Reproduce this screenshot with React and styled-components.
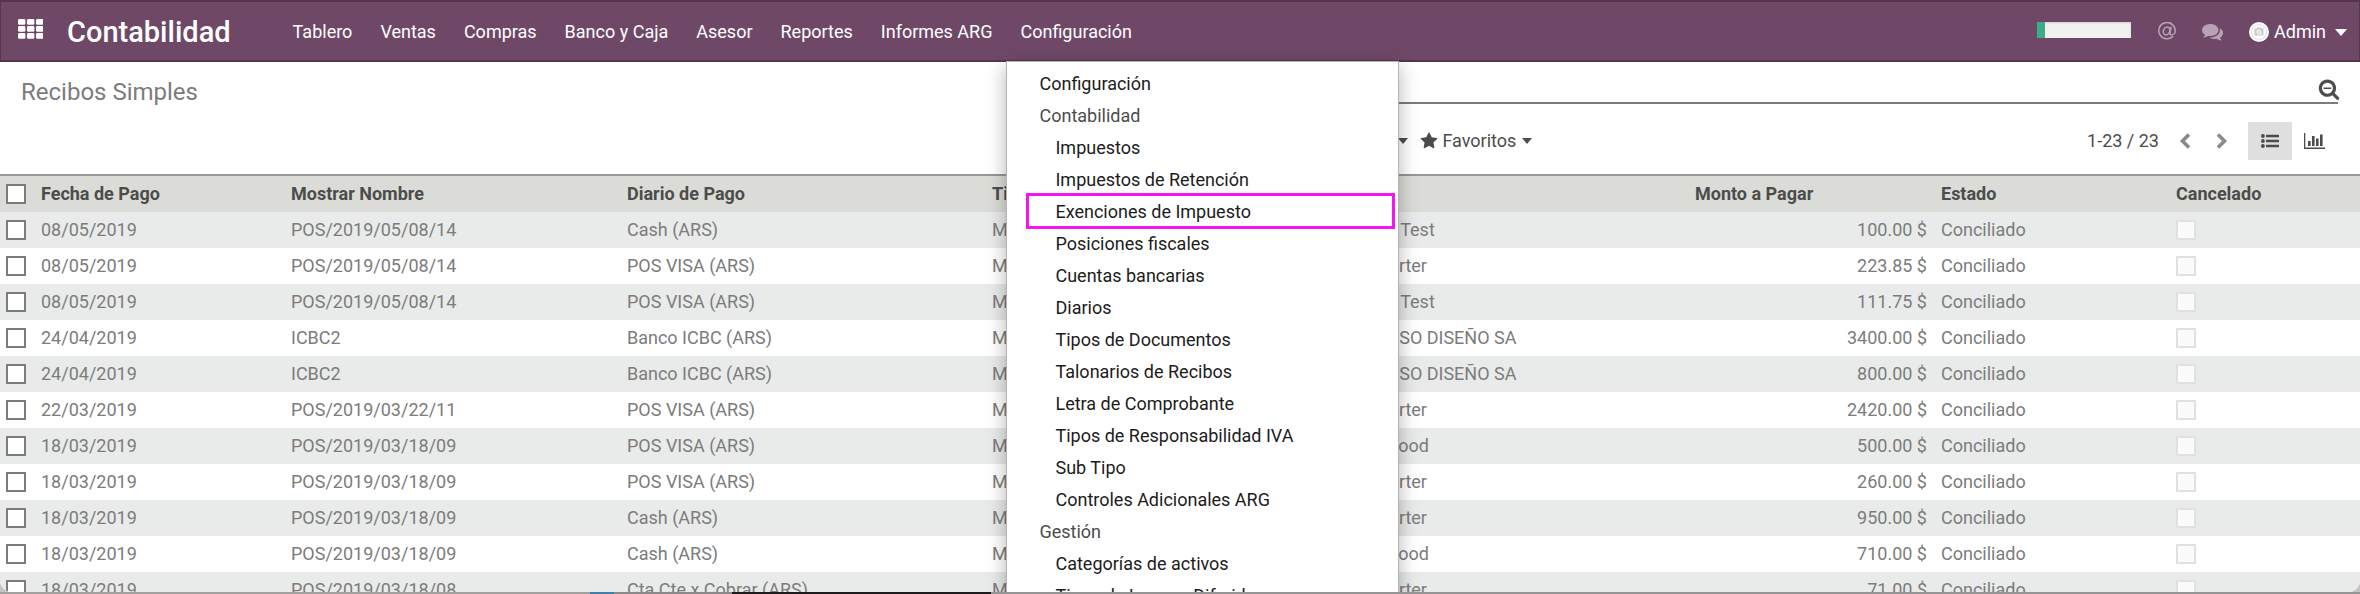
import React from 'react';
import styled, { createGlobalStyle, css } from 'styled-components';

const GlobalStyle = createGlobalStyle`
  * { box-sizing: border-box; }
  html, body { margin: 0; height: 100%; overflow: hidden; }
  #root { height: 100%; }
  body {
    background: #c4c4c4;
    font: 400 18px/24px Roboto, "Liberation Sans", sans-serif;
    color: #4c4c4c;
  }
  button, input { font: inherit; color: inherit; }
`;

const Desktop = styled.div`
  display: flex;
  flex-direction: column;
  height: 100vh;
`;

const Window = styled.div`
  flex: 1;
  min-height: 0;
  position: relative;
  overflow: hidden;
  background: #fff;
  border-radius: 0 0 12px 12px;
`;

const Dock = styled.div`
  display: flex;
  height: 2px;
  background: #949494;
`;

const DockPiece = styled.span`
  flex: 0 0 ${(p) => p.$share}%;
  background: ${(p) => p.$tone};
`;

const NavBar = styled.header`
  display: flex;
  align-items: center;
  height: 62px;
  padding: 2px 12px 0 17px;
  background: #6f4868;
  border: 2px solid #54354e;
  border-width: 2px 1px 2px 1px;
  color: #fff;
`;

const PlainButton = styled.button`
  display: inline-flex;
  align-items: center;
  padding: 0;
  border: 0;
  background: none;
  cursor: pointer;
`;

const AppsButton = styled(PlainButton)`
  padding: 0 0 7px;
`;

const Brand = styled.a`
  margin-left: 24px;
  font-size: 29px;
  line-height: 36px;
  font-weight: 500;
  color: #fff;
  text-decoration: none;
`;

const Sections = styled.ul`
  display: flex;
  margin: 0 0 0 48px;
  padding: 0;
  list-style: none;
`;

const Section = styled.li`
  position: relative;
`;

const SectionButton = styled(PlainButton)`
  height: 58px;
  padding: 0 14px;
  white-space: nowrap;
`;

const Menu = styled.ul`
  position: absolute;
  top: 100%;
  left: 0;
  z-index: 5;
  width: 393px;
  margin: 0;
  padding: 6px 0;
  list-style: none;
  background: #fff;
  border: 1px solid #b5b3b5;
  box-shadow: 0 6px 18px rgba(0, 0, 0, 0.3);
`;

const MenuItem = styled.li`
  position: relative;
  height: 32px;
  padding-left: ${(p) => (p.$nested ? 48 : 32)}px;
  line-height: 32px;
  color: #4c4c4c;
  white-space: nowrap;
  ${(p) =>
    p.$marked &&
    css`
      &::after {
        content: '';
        position: absolute;
        inset: -3px 3px -1px 19px;
        border: 3px solid #f814f2;
        pointer-events: none;
      }
    `}
`;

const MenuLink = styled.a`
  display: block;
  color: #1c1c1c;
  text-decoration: none;
`;

const Systray = styled.div`
  display: flex;
  align-items: center;
  margin-left: auto;
`;

const Progress = styled.div`
  width: 94px;
  height: 16px;
  margin: 0 27px 4px 0;
  background: #f1f1f1;
  box-shadow: inset 0 1px 2px rgba(0, 0, 0, 0.15);
`;

const ProgressFill = styled.div`
  height: 100%;
  background: #3aac87;
`;

const TrayButton = styled(PlainButton)`
  margin-right: 26px;
  padding-bottom: 2px;
  color: #b7a3b3;
`;

const UserButton = styled(PlainButton)`
  gap: 5px;
`;

const Caret = styled.span`
  width: 0;
  height: 0;
  margin-left: ${(p) => p.$gap}px;
  border: solid transparent;
  border-width: ${(p) => p.$size + 1}px ${(p) => p.$size}px 0;
  border-top-color: currentColor;
`;

const ControlPanel = styled.section`
  display: grid;
  grid-template-columns: 1fr 1fr;
  height: 112px;
  padding: 0 22px 0 21px;
`;

const Title = styled.h1`
  margin: 0;
  padding-top: 14px;
  font-size: 24px;
  line-height: 32px;
  font-weight: 400;
  color: #7c7c7c;
`;

const SearchColumn = styled.div`
  display: flex;
  flex-direction: column;
`;

const SearchBox = styled.div`
  display: flex;
  align-items: flex-end;
  height: 42px;
  border-bottom: 2px solid #7c7c7c;
`;

const SearchInput = styled.input`
  flex: 1;
  height: 32px;
  border: 0;
  outline: 0;
  background: none;
`;

const SearchButton = styled(PlainButton)`
  margin-right: -2px;
  padding-bottom: 2px;
`;

const PanelRow = styled.div`
  display: flex;
  align-items: center;
  justify-content: space-between;
  height: 70px;
  padding: 4px 2px 0 0;
`;

const Filters = styled.div`
  display: flex;
  align-items: center;
  gap: 12px;
`;

const FilterButton = styled(PlainButton)`
  gap: 4px;
`;

const PagerGroup = styled.div`
  display: flex;
  align-items: center;
`;

const PagerButton = styled(PlainButton)`
  justify-content: center;
  width: 37px;
  height: 38px;
  color: #8a8a8a;
`;

const ViewButton = styled(PlainButton)`
  justify-content: center;
  width: 44px;
  height: 38px;
  background: ${(p) => (p.$active ? '#dfdfdf' : 'transparent')};
`;

const PagerText = styled.span`
  margin-right: 7px;
`;

const Views = styled.div`
  display: flex;
  margin-left: 8px;
`;

const Table = styled.table`
  width: 100%;
  table-layout: fixed;
  border-collapse: separate;
  border-spacing: 0;
  border-top: 2px solid #979797;
`;

const HeadCell = styled.th`
  height: 36px;
  padding: 0 7px;
  background: #dbdcd7;
  font-weight: 700;
  text-align: left;
  white-space: nowrap;
`;

const Row = styled.tr`
  background: #fff;
  &:nth-child(odd) { background: #e9ebea; }
`;

const Cell = styled.td`
  height: 36px;
  padding: 0 7px;
  color: #7c7c7c;
  text-align: ${(p) => (p.$right ? 'right' : 'left')};
  white-space: nowrap;
`;

const CheckBox = styled.input.attrs({ type: 'checkbox' })`
  appearance: none;
  display: block;
  width: 20px;
  height: 20px;
  margin: 0 0 0 ${(p) => (p.disabled ? 0 : -1)}px;
  background: ${(p) => (p.disabled ? '#fafafa' : '#fff')};
  border: 2px solid ${(p) => (p.disabled ? '#e1e1e1' : '#7c7c7c')};
  &:checked { background: #7c7c7c; }
`;

const AppsIcon = () => (
  <svg width="25" height="20" viewBox="0 0 25 20" fill="currentColor">
    {[0, 7, 14].map((y) =>
      [0, 9, 18].map((x) => <rect key={`${x}-${y}`} x={x} y={y} width="7.4" height="5.8" rx="1.4" />)
    )}
  </svg>
);

const AtIcon = () => (
  <svg width="18" height="18" viewBox="0 0 18 18" fill="none" stroke="currentColor" strokeWidth="1.5" strokeLinecap="round">
    <path d="M14.6 14.6A8.2 8.2 0 1 1 17.2 8.4c0 2.6-1.6 4.4-3.5 4.4-1.3 0-1.9-.8-1.6-2.2L13 5.2" />
    <ellipse cx="8.6" cy="9" rx="3.2" ry="4" transform="rotate(20 8.6 9)" />
  </svg>
);

const CommentsIcon = () => (
  <svg width="21" height="21" viewBox="0 0 1792 1792" fill="currentColor">
    <path d="M1408 768q0 139-94 257t-256.500 186.500-353.500 68.500q-86 0-176-16-124 88-278 128-36 9-86 16h-3q-11 0-20.500-8t-11.500-21q-1-3-1-6.500t.5-6.500 2-6l2.500-5 3.500-5.500 4-5 4.500-5 4-4.500q5-6 23-25t26-29.500 22.500-29 25-38.500 20.500-44q-124-72-195-177t-71-224q0-139 94-257t256.500-186.500 353.500-68.500 353.500 68.500 256.500 186.500 94 257zm384 256q0 120-71 224.500t-195 176.500q10 24 20.500 44t25 38.500 22.500 29 26 29.500 23 25q1 1 4 4.500t4.500 5 4 5 3.500 5.500l2.500 5 2 6 .5 6.500-1 6.500q-3 14-13 22t-22 7q-50-7-86-16-154-40-278-128-90 16-176 16-271 0-472-132 58 4 88 4 161 0 309-45t264-129q125-92 192-212t67-254q0-77-23-152 129 71 204 178t75 230z" />
  </svg>
);

const AvatarIcon = () => (
  <svg width="20" height="20" viewBox="0 0 20 20">
    <circle cx="10" cy="10" r="10" fill="#fff" />
    <circle cx="10" cy="10" r="7.500" fill="none" stroke="#e2e2e2" />
    <path d="M5.500 6.500h2l1-1h3l1 1h2v7h-9z" fill="#c9c9c9" />
    <circle cx="10" cy="10" r="2" fill="none" stroke="#fff" />
    <path d="M4.500 5l11 10" stroke="#eee" />
  </svg>
);

const SearchMinusIcon = () => (
  <svg width="22" height="22" viewBox="0 0 1792 1792" fill="currentColor">
    <path d="M1088 800v64q0 13-9.500 22.500t-22.500 9.500h-576q-13 0-22.500-9.500t-9.500-22.500v-64q0-13 9.500-22.500t22.500-9.500h576q13 0 22.500 9.500t9.500 22.500zm128 32q0-185-131.500-316.500t-316.500-131.500-316.500 131.500-131.500 316.500 131.500 316.500 316.500 131.500 316.500-131.500 131.500-316.500zm512 832q0 53-37.500 90.500t-90.500 37.500q-54 0-90-38l-343-342q-179 124-399 124-143 0-273.500-55.500t-225-150-150-225-55.500-273.500 55.500-273.500 150-225 225-150 273.500-55.500 273.500 55.500 225 150 150 225 55.500 273.500q0 220-124 399l343 343q37 37 37 90z" />
  </svg>
);

const StarIcon = () => (
  <svg width="18" height="18" viewBox="0 0 1792 1792" fill="currentColor">
    <path d="M1728 647q0 22-26 48l-363 354 86 500q1 7 1 20 0 21-10.500 35.500t-30.500 14.500q-19 0-40-12l-449-236-449 236q-22 12-40 12-21 0-31.500-14.500t-10.500-35.500q0-6 2-20l86-500-364-354q-25-27-25-48 0-37 56-46l502-73 225-455q19-41 49-41t49 41l225 455 502 73q56 9 56 46z" />
  </svg>
);

const FunnelIcon = () => (
  <svg width="16" height="16" viewBox="0 0 16 16" fill="currentColor">
    <path d="M1 2h14l-5 6v6l-4-2V8z" />
  </svg>
);

const BarsIcon = () => (
  <svg width="16" height="16" viewBox="0 0 16 16" fill="currentColor">
    <path d="M1 2h14v2H1zM1 7h14v2H1zM1 12h14v2H1z" />
  </svg>
);

const ChevronIcon = ({ points }) => (
  <svg width="12" height="16" viewBox="0 0 12 16" fill="none" stroke="currentColor" strokeWidth="3.600">
    <polyline points={points} />
  </svg>
);

const ListIcon = () => (
  <svg width="18" height="14" viewBox="0 0 18 14" fill="currentColor">
    {[2, 7, 12].map((y) => (
      <g key={y}>
        <circle cx="1.900" cy={y} r="1.900" />
        <rect x="5" y={y - 1.3} width="13" height="2.600" rx=".4" />
      </g>
    ))}
  </svg>
);

const ChartIcon = () => (
  <svg width="21" height="16" viewBox="0 0 21 16" fill="currentColor">
    <path d="M0 0h1.300v14.500H21V16H0zM4 8h2.600v5H4zM8 3h2.600v10H8zM12 5.500h2.600V13H12zM16 1.500h2.600V13H16z" />
  </svg>
);

const sections = ['Tablero', 'Ventas', 'Compras', 'Banco y Caja', 'Asesor', 'Reportes', 'Informes ARG'];

const menu = [
  { label: 'Configuración' },
  { label: 'Contabilidad', heading: true },
  { label: 'Impuestos', nested: true },
  { label: 'Impuestos de Retención', nested: true },
  { label: 'Exenciones de Impuesto', nested: true, marked: true },
  { label: 'Posiciones fiscales', nested: true },
  { label: 'Cuentas bancarias', nested: true },
  { label: 'Diarios', nested: true },
  { label: 'Tipos de Documentos', nested: true },
  { label: 'Talonarios de Recibos', nested: true },
  { label: 'Letra de Comprobante', nested: true },
  { label: 'Tipos de Responsabilidad IVA', nested: true },
  { label: 'Sub Tipo', nested: true },
  { label: 'Controles Adicionales ARG', nested: true },
  { label: 'Gestión', heading: true },
  { label: 'Categorías de activos', nested: true },
  { label: 'Tipos de Ingreso Diferido', nested: true },
];

const receipts = [
  ['08/05/2019', 'POS/2019/05/08/14', 'Cash (ARS)', 'Partner Test', '100.00 $'],
  ['08/05/2019', 'POS/2019/05/08/14', 'POS VISA (ARS)', 'Cole Porter', '223.85 $'],
  ['08/05/2019', 'POS/2019/05/08/14', 'POS VISA (ARS)', 'Partner Test', '111.75 $'],
  ['24/04/2019', 'ICBC2', 'Banco ICBC (ARS)', 'UNIVERSO DISEÑO SA', '3400.00 $'],
  ['24/04/2019', 'ICBC2', 'Banco ICBC (ARS)', 'UNIVERSO DISEÑO SA', '800.00 $'],
  ['22/03/2019', 'POS/2019/03/22/11', 'POS VISA (ARS)', 'Cole Porter', '2420.00 $'],
  ['18/03/2019', 'POS/2019/03/18/09', 'POS VISA (ARS)', 'Dean Wood', '500.00 $'],
  ['18/03/2019', 'POS/2019/03/18/09', 'POS VISA (ARS)', 'Cole Porter', '260.00 $'],
  ['18/03/2019', 'POS/2019/03/18/09', 'Cash (ARS)', 'Cole Porter', '950.00 $'],
  ['18/03/2019', 'POS/2019/03/18/09', 'Cash (ARS)', 'Dean Wood', '710.00 $'],
  ['18/03/2019', 'POS/2019/03/18/08', 'Cta Cte x Cobrar (ARS)', 'Cole Porter', '71.00 $'],
];

const Column = styled.col`
  width: ${(p) => (p.$width ? `${p.$width}px` : 'auto')};
`;

const columnWidths = [34, 250, 336, 365, 345, null, 246, 235, 191];

export default function App() {
  return (
    <Desktop>
      <GlobalStyle />
      <Window>
        <NavBar>
          <AppsButton aria-label="Aplicaciones"><AppsIcon /></AppsButton>
          <Brand href="#contabilidad">Contabilidad</Brand>
          <nav>
            <Sections>
              {sections.map((name) => (
                <Section key={name}><SectionButton>{name}</SectionButton></Section>
              ))}
              <Section>
                <SectionButton aria-expanded="true">Configuración</SectionButton>
                <Menu>
                  {menu.map((item) => (
                    <MenuItem key={item.label} $nested={item.nested} $marked={item.marked}>
                      {item.heading ? item.label : <MenuLink href="#menu">{item.label}</MenuLink>}
                    </MenuItem>
                  ))}
                </Menu>
              </Section>
            </Sections>
          </nav>
          <Systray>
            <Progress role="progressbar" aria-label="Progreso" aria-valuenow={8}>
              <ProgressFill style={{ width: '8.5%' }} />
            </Progress>
            <TrayButton aria-label="Menciones"><AtIcon /></TrayButton>
            <TrayButton aria-label="Conversaciones"><CommentsIcon /></TrayButton>
            <UserButton>
              <AvatarIcon />
              Admin
              <Caret $size={6} $gap={4} />
            </UserButton>
          </Systray>
        </NavBar>

        <ControlPanel>
          <Title>Recibos Simples</Title>
          <SearchColumn>
            <SearchBox>
              <SearchInput type="text" aria-label="Buscar" />
              <SearchButton aria-label="Opciones de búsqueda"><SearchMinusIcon /></SearchButton>
            </SearchBox>
            <PanelRow>
              <Filters>
                <FilterButton><FunnelIcon />Filtros<Caret $size={5} $gap={2} /></FilterButton>
                <FilterButton><BarsIcon />Agrupar por<Caret $size={5} $gap={2} /></FilterButton>
                <FilterButton><StarIcon />Favoritos<Caret $size={5} $gap={2} /></FilterButton>
              </Filters>
              <PagerGroup>
                <PagerText>1-23 / 23</PagerText>
                <PagerButton aria-label="Anterior"><ChevronIcon points="10,1.500 3.500,8 10,14.500" /></PagerButton>
                <PagerButton aria-label="Siguiente"><ChevronIcon points="2,1.500 8.500,8 2,14.500" /></PagerButton>
                <Views>
                  <ViewButton $active aria-label="Lista"><ListIcon /></ViewButton>
                  <ViewButton aria-label="Gráfico"><ChartIcon /></ViewButton>
                </Views>
              </PagerGroup>
            </PanelRow>
          </SearchColumn>
        </ControlPanel>

        <Table>
          <colgroup>
            {columnWidths.map((width, i) => <Column key={i} $width={width} />)}
          </colgroup>
          <thead>
            <tr>
              <HeadCell><CheckBox aria-label="Seleccionar todo" /></HeadCell>
              <HeadCell>Fecha de Pago</HeadCell>
              <HeadCell>Mostrar Nombre</HeadCell>
              <HeadCell>Diario de Pago</HeadCell>
              <HeadCell>Tipo</HeadCell>
              <HeadCell>Socio</HeadCell>
              <HeadCell>Monto a Pagar</HeadCell>
              <HeadCell>Estado</HeadCell>
              <HeadCell>Cancelado</HeadCell>
            </tr>
          </thead>
          <tbody>
            {receipts.map(([date, name, journal, partner, amount], i) => (
              <Row key={i}>
                <Cell><CheckBox aria-label={`Seleccionar ${name}`} /></Cell>
                <Cell>{date}</Cell>
                <Cell>{name}</Cell>
                <Cell>{journal}</Cell>
                <Cell>Manual</Cell>
                <Cell>{partner}</Cell>
                <Cell $right>{amount}</Cell>
                <Cell>Conciliado</Cell>
                <Cell><CheckBox disabled aria-label="Cancelado" /></Cell>
              </Row>
            ))}
          </tbody>
        </Table>
      </Window>
      <Dock>
        <DockPiece $share={25} $tone="#a3a0a0" />
        <DockPiece $share={1} $tone="#3f7fa8" />
        <DockPiece $share={5} $tone="#8b8989" />
        <DockPiece $share={11} $tone="#1c1a1b" />
      </Dock>
    </Desktop>
  );
}
